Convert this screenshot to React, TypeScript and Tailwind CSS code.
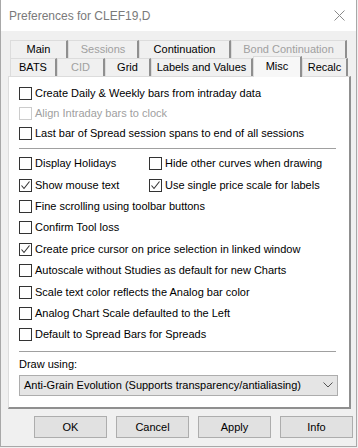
import React from 'react';

const font = { fontFamily: '"Liberation Sans", Arial, sans-serif' };

function CheckBox({ checked, disabled }: { checked?: boolean; disabled?: boolean }) {
  return (
    <span
      className={`w-[13px] h-[13px] shrink-0 border bg-white flex items-center justify-center ${
        disabled ? 'border-[#cccccc]' : 'border-[#333333]'
      }`}
    >
      {checked && (
        <svg width="11" height="11" viewBox="0 0 11 11">
          <path d="M1.5 5.5 L4 8.5 L9.5 1.5" fill="none" stroke="#333" strokeWidth="1.1" />
        </svg>
      )}
    </span>
  );
}

function Option({
  label,
  checked,
  disabled,
  className = '',
}: {
  label: string;
  checked?: boolean;
  disabled?: boolean;
  className?: string;
}) {
  return (
    <div className={`flex items-center gap-[3px] ${className}`}>
      <CheckBox checked={checked} disabled={disabled} />
      <span className={`whitespace-nowrap ${disabled ? 'text-[#a0a0a0]' : 'text-black'}`}>{label}</span>
    </div>
  );
}

function Tab({ label, w, disabled }: { label: string; w: string; disabled?: boolean }) {
  return (
    <div
      className={`${w} h-full flex items-center justify-center border-t border-l border-[#dcdcdc] border-r-2 border-r-[#8f8f8f] bg-[#f0f0f0] ${
        disabled ? 'text-[#a0a0a0]' : 'text-black'
      }`}
    >
      {label}
    </div>
  );
}

export default function App() {
  return (
    <div className="w-[358px] h-[448px] bg-[#f0f0f0] text-[11px] leading-none relative overflow-hidden" style={font}>
      <div className="w-[357px] h-[447px] border-l border-r border-b border-[#a8a8a8] flex flex-col">
        {/* title bar */}
        <div className="h-[31px] bg-white flex items-center justify-between pl-[8px] pr-[11px]">
          <span className="text-[#7a7a7a] text-[12px]">Preferences for CLEF19,D</span>
          <svg width="11" height="11" viewBox="0 0 11 11">
            <path d="M0.5 0.5 L10.5 10.5 M10.5 0.5 L0.5 10.5" stroke="#8a8a8a" strokeWidth="1" />
          </svg>
        </div>

        {/* tabs */}
        <div className="pl-[9px] pt-[9px] flex flex-col">
          <div className="flex h-[18px]">
            <Tab label="Main" w="w-[58px]" />
            <Tab label="Sessions" w="w-[71px]" disabled />
            <Tab label="Continuation" w="w-[92px]" />
            <Tab label="Bond Continuation" w="w-[116px]" disabled />
          </div>
          <div className="flex h-[18px] items-end">
            <Tab label="BATS" w="w-[47px]" />
            <Tab label="CID" w="w-[48px]" disabled />
            <Tab label="Grid" w="w-[46px]" />
            <Tab label="Labels and Values" w="w-[102px]" />
            <div className="w-[49px] h-[21px] -mb-[1px] relative z-10 flex items-center justify-center border-t border-l border-[#dcdcdc] border-r-2 border-r-[#8f8f8f] bg-[#f7f7f7] text-black pb-[1px]">
              Misc
            </div>
            <Tab label="Recalc" w="w-[46px]" />
          </div>
        </div>

        {/* panel */}
        <div className="ml-[7px] w-[343px] h-[333px] bg-white border-t border-l border-[#dcdcdc] border-r-2 border-b-2 border-r-[#8f8f8f] border-b-[#8f8f8f] pl-[10px] pr-[13px] flex flex-col">
          <div className="pt-[6px] flex flex-col">
            <Option className="h-[20px]" label="Create Daily & Weekly bars from intraday data" />
            <Option className="h-[20px]" label="Align Intraday bars to clock" disabled />
            <Option className="h-[20px]" label="Last bar of Spread session spans to end of all sessions" />
          </div>
          <div className="mt-[5px] h-px bg-[#a0a0a0]" />
          <div className="mt-[4px] flex flex-col">
            <div className="h-[21.4px] flex items-center">
              <Option className="w-[130px]" label="Display Holidays" />
              <Option label="Hide other curves when drawing" />
            </div>
            <div className="h-[21.4px] flex items-center">
              <Option className="w-[130px]" label="Show mouse text" checked />
              <Option label="Use single price scale for labels" checked />
            </div>
            <Option className="h-[21.4px]" label="Fine scrolling using toolbar buttons" />
            <Option className="h-[21.4px]" label="Confirm Tool loss" />
            <Option className="h-[21.4px]" label="Create price cursor on price selection in linked window" checked />
            <Option className="h-[21.4px]" label="Autoscale without Studies as default for new Charts" />
            <Option className="h-[21.4px]" label="Scale text color reflects the Analog bar color" />
            <Option className="h-[21.4px]" label="Analog Chart Scale defaulted to the Left" />
            <Option className="h-[21.4px]" label="Default to Spread Bars for Spreads" />
          </div>
          <div className="mt-[5px] h-px bg-[#a0a0a0]" />
          <div className="mt-[7px] h-[12px] flex items-center text-black">Draw using:</div>
          <div className="mt-[4px] h-[21px] w-[319px] bg-[#e5e5e5] border border-[#adadad] flex items-center justify-between pl-[4px] pr-[4px] text-black">
            <span className="whitespace-nowrap">Anti-Grain Evolution (Supports transparency/antialiasing)</span>
            <svg width="10" height="6" viewBox="0 0 10 6">
              <path d="M0.5 0.5 L5 5 L9.5 0.5" fill="none" stroke="#555" strokeWidth="1" />
            </svg>
          </div>
        </div>

        {/* buttons */}
        <div className="mt-[7px] pl-[33px] flex gap-[9px]">
          {['OK', 'Cancel', 'Apply', 'Info'].map((b) => (
            <button
              key={b}
              className="w-[73px] h-[22px] bg-[#e1e1e1] border border-[#adadad] text-black text-[11px] flex items-center justify-center"
            >
              {b}
            </button>
          ))}
        </div>
      </div>
    </div>
  );
}
